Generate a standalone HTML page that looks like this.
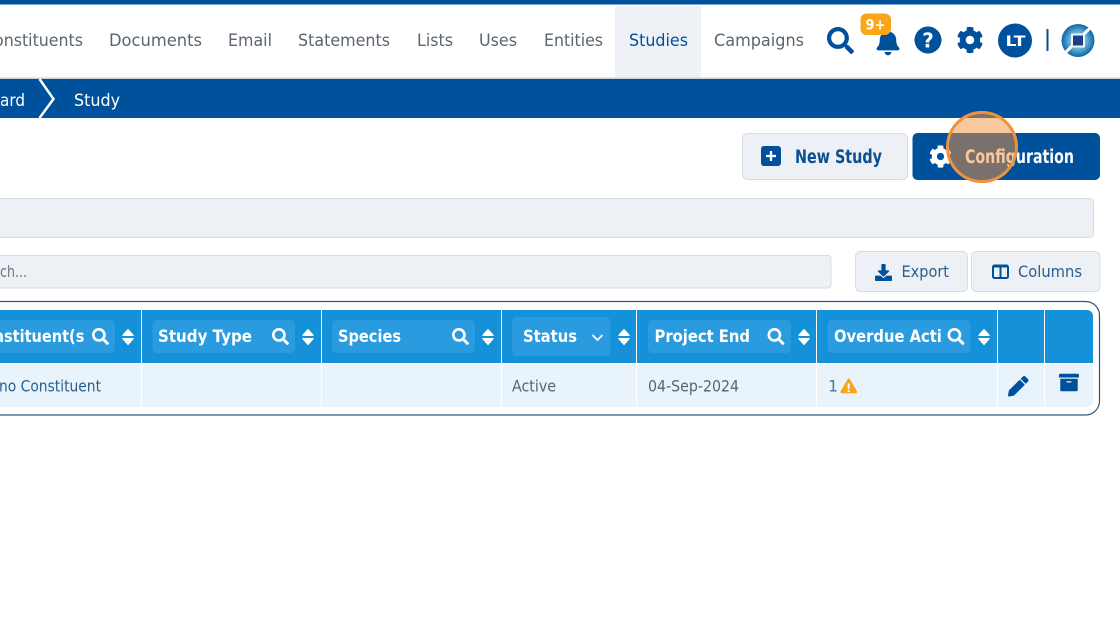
<!DOCTYPE html>
<html lang="en">
<head>
<meta charset="utf-8">
<title>Studies</title>
<style>
html,body{margin:0;padding:0;background:#fff;width:1120px;height:625px;overflow:hidden}
svg{display:block}
text{font-family:"DejaVu Sans","Liberation Sans",sans-serif}
.nav{font-size:17px;fill:#5a6570}
.th{font-size:17px;font-weight:700;fill:#fff}
.td{font-size:16px;fill:#5a6570}
.tb{font-size:16px;fill:#2a5f8f}
.btn{fill:#edf0f5;stroke:#d6dce3;stroke-width:1}
</style>
</head>
<body>
<svg width="1120" height="625" viewBox="0 0 1120 625" xmlns="http://www.w3.org/2000/svg">
<defs>
<path id="search" d="M505 442.7L405.3 343c-4.5-4.5-10.6-7-17-7H372c27.6-35.3 44-79.7 44-128C416 93.1 322.9 0 208 0S0 93.1 0 208s93.1 208 208 208c48.3 0 92.7-16.4 128-44v16.3c0 6.4 2.5 12.5 7 17l99.7 99.7c9.4 9.4 24.6 9.4 33.9 0l28.3-28.3c9.4-9.4 9.4-24.6.1-34zM208 336c-70.7 0-128-57.2-128-128 0-70.7 57.2-128 128-128 70.7 0 128 57.2 128 128 0 70.7-57.2 128-128 128z"/>
<path id="cog" d="M487.4 315.7l-42.6-24.6c4.3-23.2 4.3-47 0-70.2l42.6-24.6c4.9-2.8 7.1-8.6 5.5-14-11.1-35.6-30-67.8-54.7-94.6-3.8-4.1-10-5.1-14.8-2.3L380.8 110c-17.9-15.4-38.5-27.3-60.8-35.1V25.8c0-5.6-3.9-10.5-9.4-11.7-36.7-8.2-74.3-7.8-109.2 0-5.5 1.2-9.4 6.1-9.4 11.7V75c-22.2 7.9-42.8 19.8-60.8 35.1L88.7 85.5c-4.9-2.8-11-1.9-14.8 2.3-24.7 26.7-43.6 58.9-54.7 94.6-1.7 5.4.6 11.2 5.5 14L67.3 221c-4.3 23.2-4.3 47 0 70.2l-42.6 24.6c-4.9 2.8-7.1 8.6-5.5 14 11.1 35.6 30 67.8 54.7 94.6 3.8 4.1 10 5.1 14.8 2.3l42.6-24.6c17.9 15.4 38.5 27.3 60.8 35.1v49.2c0 5.6 3.9 10.5 9.4 11.7 36.7 8.2 74.3 7.8 109.2 0 5.5-1.2 9.4-6.1 9.4-11.7v-49.2c22.2-7.9 42.8-19.8 60.8-35.1l42.6 24.6c4.9 2.8 11 1.9 14.8-2.3 24.7-26.7 43.6-58.9 54.7-94.6 1.5-5.5-.7-11.3-5.6-14.1zM256 336c-44.1 0-80-35.9-80-80s35.9-80 80-80 80 35.9 80 80-35.9 80-80 80z"/>
<path id="sort" fill="#fff" stroke="#fff" stroke-width="1.400" stroke-linejoin="round" d="M0 -7.300L5 -1.700H-5ZM0 7.300L5 1.700H-5Z"/>
<clipPath id="c1"><rect x="0" y="320" width="85" height="33"/></clipPath>
<clipPath id="c2"><rect x="827" y="320" width="114" height="33"/></clipPath>
<clipPath id="logoClip"><circle cx="1078" cy="40.500" r="16.500"/></clipPath>
<radialGradient id="lg" cx="50%" cy="50%" r="50%"><stop offset="0" stop-color="#dff2fa"/><stop offset=".5" stop-color="#6db4d8"/><stop offset="1" stop-color="#0b66a5"/></radialGradient>
</defs>

<!-- top bar + nav -->
<rect width="1120" height="625" fill="#fff"/>
<rect width="1120" height="4.500" fill="#00519c"/>
<rect x="615" y="6" width="86" height="71.500" fill="#eef1f6"/>
<rect y="77.500" width="1120" height="1.500" fill="#c9d0d8"/>
<text class="nav" x="-17" y="46" textLength="100" lengthAdjust="spacingAndGlyphs">Constituents</text>
<text class="nav" x="109" y="46" textLength="93" lengthAdjust="spacingAndGlyphs">Documents</text>
<text class="nav" x="228" y="46" textLength="44" lengthAdjust="spacingAndGlyphs">Email</text>
<text class="nav" x="298" y="46" textLength="92" lengthAdjust="spacingAndGlyphs">Statements</text>
<text class="nav" x="417" y="46" textLength="36" lengthAdjust="spacingAndGlyphs">Lists</text>
<text class="nav" x="479" y="46" textLength="38" lengthAdjust="spacingAndGlyphs">Uses</text>
<text class="nav" x="544" y="46" textLength="59" lengthAdjust="spacingAndGlyphs">Entities</text>
<text class="nav" x="629" y="46" textLength="59" lengthAdjust="spacingAndGlyphs" style="fill:#00519c">Studies</text>
<text class="nav" x="714" y="46" textLength="90" lengthAdjust="spacingAndGlyphs">Campaigns</text>

<!-- nav icons -->
<use href="#search" transform="translate(827,27) scale(.0527)" fill="#00519c"/>
<path transform="translate(876.500,29) scale(.0513)" fill="#00519c" d="M224 512c35.32 0 63.97-28.65 63.97-64H160.03c0 35.35 28.65 64 63.97 64zm215.39-149.71c-19.32-20.76-55.47-51.99-55.47-154.29 0-77.7-54.48-139.9-127.94-155.16V32c0-17.67-14.32-32-31.98-32s-31.98 14.33-31.98 32v20.84C118.56 68.1 64.08 130.3 64.08 208c0 102.3-36.15 133.53-55.47 154.29-6 6.45-8.66 14.16-8.61 21.71.11 16.4 12.98 32 32.1 32h383.8c19.12 0 32-15.6 32.1-32 .05-7.55-2.61-15.27-8.61-21.71z"/>
<rect x="860.500" y="13.500" width="30.500" height="21.500" rx="6" fill="#faa61a"/>
<text x="865.500" y="29.500" font-size="14" font-weight="700" fill="#fff" textLength="20" lengthAdjust="spacingAndGlyphs">9+</text>
<circle cx="928" cy="40" r="13.500" fill="#00519c"/>
<text x="928" y="47.500" text-anchor="middle" font-size="20" font-weight="700" fill="#fff">?</text>
<use href="#cog" transform="translate(956.500,26.500) scale(.0527)" fill="#00519c"/>
<circle cx="1015" cy="40.500" r="17" fill="#00519c"/>
<text x="1005.500" y="46" font-size="14.500" font-weight="700" fill="#fff" textLength="20" lengthAdjust="spacingAndGlyphs">LT</text>
<rect x="1046.500" y="29" width="2" height="22" fill="#0f4a85"/>
<circle cx="1078" cy="40.500" r="16.500" fill="url(#lg)"/>
<g clip-path="url(#logoClip)"><path d="M1060 58 L1096 22" stroke="#fff" stroke-width="3"/></g>
<rect x="1071" y="33.500" width="14" height="14" fill="#eaf5fa"/>
<rect x="1073" y="35.500" width="10" height="10" fill="#1d3f8a"/>

<!-- breadcrumb -->
<rect y="79" width="1120" height="39" fill="#00519c"/>
<path d="M39.500 79 L53.500 99 L39.500 118" fill="none" stroke="#fff" stroke-width="2.500"/>
<text x="0" y="106" font-size="17" fill="#fff" textLength="25" lengthAdjust="spacingAndGlyphs">ard</text>
<text x="74" y="106" font-size="17" fill="#fff" textLength="46" lengthAdjust="spacingAndGlyphs">Study</text>

<!-- action buttons -->
<rect class="btn" x="742.500" y="133.500" width="165" height="46" rx="5"/>
<rect x="761" y="146" width="20" height="20" rx="3" fill="#00519c"/>
<path d="M771 151v10M766 156h10" stroke="#fff" stroke-width="2.300"/>
<text x="795" y="163" font-size="18.500" font-weight="700" fill="#0a4f92" textLength="87" lengthAdjust="spacingAndGlyphs">New Study</text>
<rect x="912.500" y="133" width="187.500" height="47" rx="5" fill="#00519c"/>
<use href="#cog" transform="translate(929,145) scale(.0449)" fill="#fff"/>
<text x="965" y="163" font-size="18.500" font-weight="700" fill="#fff" textLength="109" lengthAdjust="spacingAndGlyphs">Configuration</text>
<circle cx="982" cy="147" r="34.500" fill="#f4913c" fill-opacity=".5" stroke="#f0923c" stroke-width="3"/>

<!-- filter bars -->
<rect class="btn" x="-6" y="198.500" width="1099.500" height="39" rx="4"/>
<rect class="btn" x="-6" y="255.500" width="837" height="32.500" rx="3"/>
<text x="0" y="277" font-size="16" fill="#6c7680" textLength="27" lengthAdjust="spacingAndGlyphs">ch...</text>

<rect class="btn" x="855.500" y="251.500" width="112" height="40" rx="5"/>
<path transform="translate(875,264) scale(.0332)" fill="#00519c" d="M216 0h80c13.300 0 24 10.700 24 24v168h87.700c17.800 0 26.700 21.500 14.100 34.100L269.700 378.300c-7.500 7.500-19.800 7.500-27.300 0L90.100 226.100c-12.600-12.600-3.700-34.100 14.100-34.100H192V24c0-13.300 10.700-24 24-24zm296 376v112c0 13.300-10.700 24-24 24H24c-13.300 0-24-10.700-24-24V376c0-13.300 10.700-24 24-24h146.700l49 49c20.100 20.100 52.500 20.100 72.600 0l49-49H488c13.300 0 24 10.700 24 24z"/>
<text x="901.500" y="277" font-size="16" fill="#2a5f8f" textLength="47.500" lengthAdjust="spacingAndGlyphs">Export</text>
<rect class="btn" x="971.500" y="251.500" width="128.500" height="40" rx="5"/>
<rect x="993" y="265.500" width="15" height="12.500" rx="1.500" fill="none" stroke="#00519c" stroke-width="2"/>
<path d="M1000.500 265v13M993 266.500h15" stroke="#00519c" stroke-width="2"/>
<text x="1018" y="277" font-size="16" fill="#2a5f8f" textLength="64" lengthAdjust="spacingAndGlyphs">Columns</text>

<!-- table -->
<rect x="-20" y="301.500" width="1119.500" height="113.500" rx="14" fill="#fff" stroke="#2b5a80" stroke-width="1.200"/>
<path d="M0 310H1087a6 6 0 0 1 6 6V363.500H0Z" fill="#1591d9"/>
<path d="M0 364.500H1093V401a6 6 0 0 1 -6 6H0Z" fill="#e8f3fb"/>
<g fill="#fff">
<rect x="141" y="310" width="1" height="97"/>
<rect x="321" y="310" width="1" height="97"/>
<rect x="501" y="310" width="1" height="97"/>
<rect x="636" y="310" width="1" height="97"/>
<rect x="816" y="310" width="1" height="97"/>
<rect x="997" y="310" width="1" height="97"/>
<rect x="1044" y="310" width="1" height="97"/>
<rect y="363" width="1093" height="1.200"/>
</g>

<!-- filter chips -->
<g fill="#2b9bdf">
<path d="M0 320H110a5 5 0 0 1 5 5V348a5 5 0 0 1 -5 5H0Z"/>
<rect x="152.500" y="320" width="142.500" height="33" rx="5"/>
<rect x="332" y="320" width="143" height="33" rx="5"/>
<rect x="512" y="317" width="98.500" height="39" rx="5"/>
<rect x="648" y="320" width="143" height="33" rx="5"/>
<rect x="827.500" y="320" width="143" height="33" rx="5"/>
</g>
<g clip-path="url(#c1)"><text class="th" x="-27" y="342" textLength="118" lengthAdjust="spacingAndGlyphs">Constituent(s)</text></g>
<text class="th" x="158" y="342" textLength="94" lengthAdjust="spacingAndGlyphs">Study Type</text>
<text class="th" x="338" y="342" textLength="63" lengthAdjust="spacingAndGlyphs">Species</text>
<text class="th" x="523" y="342" textLength="54" lengthAdjust="spacingAndGlyphs">Status</text>
<text class="th" x="654.500" y="342" textLength="95.500" lengthAdjust="spacingAndGlyphs">Project End</text>
<g clip-path="url(#c2)"><text class="th" x="834" y="342" textLength="118" lengthAdjust="spacingAndGlyphs">Overdue Actio</text></g>

<g fill="#fff">
<use href="#search" transform="translate(92,328) scale(.0332)"/>
<use href="#search" transform="translate(272,328) scale(.0332)"/>
<use href="#search" transform="translate(452,328) scale(.0332)"/>
<use href="#search" transform="translate(767.500,328) scale(.0332)"/>
<use href="#search" transform="translate(947.500,328) scale(.0332)"/>
</g>
<path d="M592.500 335L597.500 340L602.500 335" fill="none" stroke="#fff" stroke-width="1.700"/>
<use href="#sort" x="128" y="337"/>
<use href="#sort" x="308" y="337"/>
<use href="#sort" x="488" y="337"/>
<use href="#sort" x="624" y="337"/>
<use href="#sort" x="804" y="337"/>
<use href="#sort" x="984" y="337"/>

<!-- row -->
<text class="tb" x="-1" y="391.500" textLength="102" lengthAdjust="spacingAndGlyphs">no Constituent</text>
<text class="td" x="512" y="391.500" textLength="44" lengthAdjust="spacingAndGlyphs">Active</text>
<text class="td" x="648" y="391.500" textLength="91" lengthAdjust="spacingAndGlyphs">04-Sep-2024</text>
<text class="td" x="828" y="391.500" style="fill:#4d7aa3">1</text>
<path transform="translate(840.500,378.500) scale(.0287)" fill="#f9a51a" d="M569.517 440.013C587.975 472.007 564.806 512 527.94 512H48.054c-36.937 0-59.999-40.055-41.577-71.987L246.423 23.985c18.467-32.009 64.72-31.951 83.154 0l239.94 416.028z"/>
<rect x="847.700" y="383.500" width="2" height="5.500" fill="#fff"/>
<rect x="847.700" y="390" width="2" height="2" fill="#fff"/>
<path transform="translate(1008,376) scale(.0400)" fill="#00519c" d="M497.900 142.100l-46.100 46.100c-4.700 4.700-12.300 4.700-17 0l-111-111c-4.700-4.700-4.700-12.300 0-17l46.100-46.100c18.700-18.700 49.100-18.700 67.900 0l60.100 60.100c18.800 18.700 18.800 49.100 0 67.900zM284.200 99.800L21.600 362.400.4 483.900c-2.900 16.400 11.400 30.600 27.800 27.800l121.500-21.300 262.600-262.600c4.700-4.700 4.700-12.300 0-17l-111-111c-4.800-4.700-12.400-4.700-17.100 0z"/>
<path transform="translate(1059,372.500) scale(.0390)" fill="#00519c" d="M32 448c0 17.700 14.300 32 32 32h384c17.700 0 32-14.300 32-32V160H32v288zm160-212c0-6.600 5.400-12 12-12h104c6.600 0 12 5.400 12 12v8c0 6.600-5.400 12-12 12H204c-6.600 0-12-5.400-12-12v-8zM480 32H32C14.300 32 0 46.300 0 64v48c0 8.800 7.200 16 16 16h480c8.800 0 16-7.200 16-16V64c0-17.700-14.300-32-32-32z"/>
</svg>
</body>
</html>
